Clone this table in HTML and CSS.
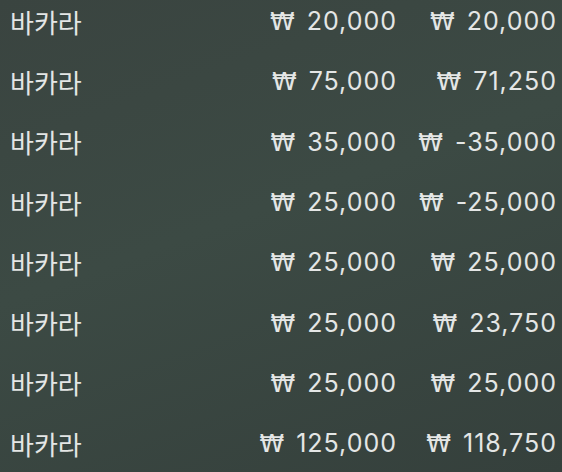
FILE: index.html
```html
<!DOCTYPE html>
<html lang="ko">
<head>
    <meta charset="UTF-8">
    <meta name="viewport" content="width=device-width, initial-scale=1.0">
    <title>베팅 내역</title>
    <link rel="stylesheet" href="styles.css">
</head>
<body>
    <!-- 베팅 내역 목록 -->
    <div class="list">
        <div class="row"><span class="game">바카라</span><span class="amt"><span class="won">₩</span> 20,000</span><span class="amt"><span class="won">₩</span> 20,000</span></div>
        <div class="row"><span class="game">바카라</span><span class="amt"><span class="won">₩</span> 75,000</span><span class="amt"><span class="won">₩</span> 71,250</span></div>
        <div class="row"><span class="game">바카라</span><span class="amt"><span class="won">₩</span> 35,000</span><span class="amt"><span class="won">₩</span> -35,000</span></div>
        <div class="row"><span class="game">바카라</span><span class="amt"><span class="won">₩</span> 25,000</span><span class="amt"><span class="won">₩</span> -25,000</span></div>
        <div class="row"><span class="game">바카라</span><span class="amt"><span class="won">₩</span> 25,000</span><span class="amt"><span class="won">₩</span> 25,000</span></div>
        <div class="row"><span class="game">바카라</span><span class="amt"><span class="won">₩</span> 25,000</span><span class="amt"><span class="won">₩</span> 23,750</span></div>
        <div class="row"><span class="game">바카라</span><span class="amt"><span class="won">₩</span> 25,000</span><span class="amt"><span class="won">₩</span> 25,000</span></div>
        <div class="row"><span class="game">바카라</span><span class="amt"><span class="won">₩</span> 125,000</span><span class="amt"><span class="won">₩</span> 118,750</span></div>
    </div>
</body>
</html>
```

FILE: styles.css
```css
html, body {
    margin: 0;
    height: 100%;
    overflow: hidden;
}
body {
    background: linear-gradient(160deg, #3a4440 0%, #3c4a44 45%, #35403c 100%);
    color: #e4e6e5;
    font-family: Inter, "Noto Sans CJK KR", sans-serif;
}
.list {
    margin-top: -9px;
}
.row {
    display: grid;
    grid-template-columns: 1fr 160px 160px;
    align-items: center;
    height: 60.3px;
    padding: 0 5px 0 10px;
    font-size: 25px;
}
.game {
    font-family: "Noto Sans CJK KR", sans-serif;
    font-size: 26px;
}
.amt {
    text-align: right;
    letter-spacing: 1px;
}
.won {
    font-family: "DejaVu Sans", sans-serif;
    letter-spacing: 0;
    margin-right: 4px;
}
```
